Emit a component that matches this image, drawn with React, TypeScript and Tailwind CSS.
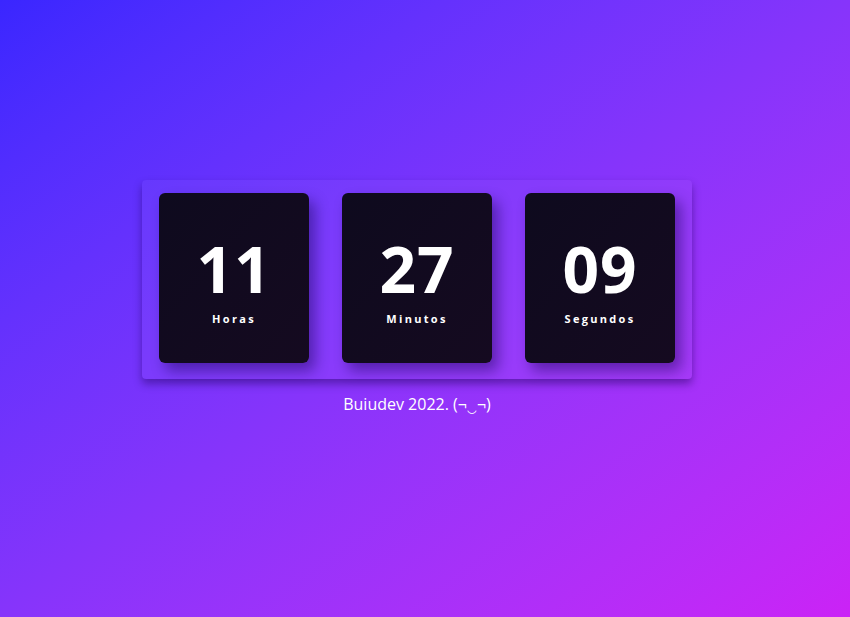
const units = [
  { value: "11", label: "Horas" },
  { value: "27", label: "Minutos" },
  { value: "09", label: "Segundos" },
];

const TimeCard = ({ value, label }: { value: string; label: string }) => {
  return (
    <div className="flex h-[170px] w-[150px] flex-col items-center justify-center rounded-md bg-gradient-to-br from-[#0e0a1e] to-[#150a20] pt-[8px] shadow-[6px_8px_14px_rgba(20,0,80,0.45)]">
      <span className="text-[64px] font-bold leading-none tracking-[1px] text-white">
        {value}
      </span>
      <span className="mt-[10px] text-[11px] font-bold tracking-[2.3px] text-white">
        {label}
      </span>
    </div>
  );
};

export default function App() {
  return (
    <div
      className="flex h-[617px] w-full flex-col items-center bg-gradient-to-br from-[#3a26ff] to-[#cb22f6] pr-[16px] pt-[180px]"
      style={{ fontFamily: '"Open Sans", sans-serif' }}
    >
      <div className="flex gap-[33px] rounded bg-white/[0.04] px-[17px] pb-[16px] pt-[13px] shadow-[0_5px_8px_rgba(30,0,90,0.45)]">
        {units.map((u) => (
          <TimeCard key={u.label} value={u.value} label={u.label} />
        ))}
      </div>
      <p className="mt-[13px] text-base text-white">Buiudev 2022. (¬‿¬)</p>
    </div>
  );
}
